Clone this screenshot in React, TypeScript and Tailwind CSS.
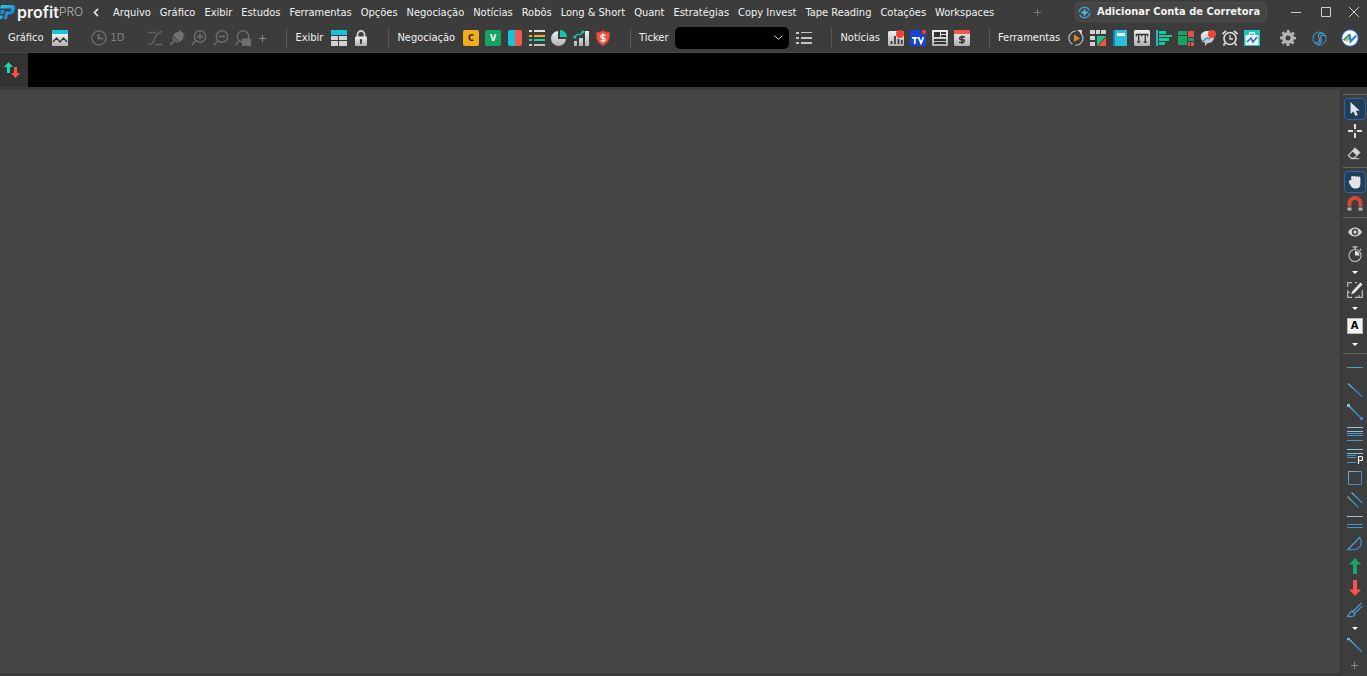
import React from "react";
import clsx from "clsx";

interface IconProps {
  children: React.ReactNode;
  size?: number;
}

const Icon: React.FC<IconProps> = ({ children, size = 16 }) => (
  <svg width={size} height={size} viewBox="0 0 16 16" fill="none" className="shrink-0" aria-hidden="true">
    {children}
  </svg>
);

interface ToolProps {
  label: string;
  children: React.ReactNode;
  className?: string;
}

const Tool: React.FC<ToolProps> = ({ label, children, className }) => (
  <button
    title={label}
    aria-label={label}
    className={clsx("flex h-[22px] w-[22px] shrink-0 items-center justify-center", className)}
  >
    {children}
  </button>
);

const Caret: React.FC<{ label: string }> = ({ label }) => (
  <button aria-label={label} className="flex h-[14px] w-[22px] shrink-0 items-center justify-center">
    <svg width="6" height="3" viewBox="0 0 6 3" aria-hidden="true">
      <path d="M0 0h6L3 3z" fill="#fff" />
    </svg>
  </button>
);

const Group: React.FC<{ label: string; children: React.ReactNode; last?: boolean }> = ({
  label,
  children,
  last,
}) => (
  <div className="flex shrink-0 items-center">
    <span className="mr-[5px] whitespace-nowrap pl-2">{label}</span>
    {children}
    {!last && <span className="ml-4 h-5 w-px bg-[#585858]" />}
  </div>
);

const menus = [
  "Arquivo",
  "Gráfico",
  "Exibir",
  "Estudos",
  "Ferramentas",
  "Opções",
  "Negociação",
  "Notícias",
  "Robôs",
  "Long & Short",
  "Quant",
  "Estratégias",
  "Copy Invest",
  "Tape Reading",
  "Cotações",
  "Workspaces",
];

const Gradients = () => (
  <svg width="0" height="0" className="absolute" aria-hidden="true">
    <defs>
      <linearGradient id="silver" x1="0" y1="0" x2="0" y2="1">
        <stop offset="0" stopColor="#f0f0f0" />
        <stop offset="1" stopColor="#aeb0b3" />
      </linearGradient>
      <linearGradient id="brand" x1="0" y1="0" x2="1" y2="1">
        <stop offset="0" stopColor="#19d3e6" />
        <stop offset="1" stopColor="#1e63d8" />
      </linearGradient>
      <linearGradient id="line" gradientUnits="userSpaceOnUse" x1="0" y1="0" x2="16" y2="16">
        <stop offset="0" stopColor="#7cc4d8" />
        <stop offset="0.5" stopColor="#3d9ad2" />
        <stop offset="1" stopColor="#3f74c4" />
      </linearGradient>
    </defs>
  </svg>
);

const Logo = () => (
  <div className="flex w-[83px] shrink-0 items-center">
    <svg width="17" height="16" viewBox="0 0 17 16" className="shrink-0" aria-hidden="true">
      <path d="M1 1h11c2.500 0 3.500 1.500 3 3.500l-.8 3C13.600 9.500 12 10.500 10 10.500H8L7 15H3.500L6 7.500h4.500l.7-3H0z" fill="url(#brand)" />
      <path d="M1 6h4L3.500 10H0z" fill="#2386de" />
      <path d="M0 11.500h3L2 15H0z" fill="#19b3e6" />
    </svg>
    <span className="font-['Inter',sans-serif] text-[16px] leading-5 font-semibold text-[#f4f4f4]">profit</span>
    <span className="font-['Inter',sans-serif] text-[12px] leading-5 font-light text-[#b4b4b4]">PRO</span>
  </div>
);

const TitleBar = () => (
  <header className="flex h-6 shrink-0 items-center">
    <Logo />
    <button aria-label="Recolher menu" className="flex h-5 w-[26px] shrink-0 items-center justify-center">
      <svg width="6" height="9" viewBox="0 0 6 9" fill="none" aria-hidden="true">
        <path d="M5 .8L1.500 4.500 5 8.200" stroke="#e0e0e0" strokeWidth="1.800" />
      </svg>
    </button>
    <nav className="ml-1 flex shrink-0 items-center gap-[9px] pt-0.5">
      {menus.map((item) => (
        <button key={item} className="whitespace-nowrap">
          {item}
        </button>
      ))}
    </nav>
    <div className="ml-auto flex shrink-0 items-center">
      <button aria-label="Novo menu" className="mr-7 flex h-5 w-5 items-center justify-center">
        <svg width="7" height="7" viewBox="0 0 7 7" aria-hidden="true">
          <path d="M3 0h1v7H3zM0 3h7v1H0z" fill="#7b7b7b" />
        </svg>
      </button>
      <button className="mr-3.5 flex h-5 w-[192px] items-center gap-1.5 rounded border border-[#4c4c4c] bg-[#454545] px-0.5 font-bold whitespace-nowrap">
        <Icon size={13}>
          <circle cx="8" cy="8" r="6.500" stroke="#3a9fd6" strokeWidth="1.800" strokeDasharray="17 3.400" />
          <path d="M8 4.200v7.600M4.200 8h7.600" stroke="#56b9e6" strokeWidth="2.200" />
        </Icon>
        Adicionar Conta de Corretora
      </button>
      <button aria-label="Minimizar" className="flex h-6 w-[30px] items-center justify-center">
        <svg width="10" height="10" viewBox="0 0 10 10" aria-hidden="true">
          <path d="M0 5h10v1H0z" fill="#d0d0d0" />
        </svg>
      </button>
      <button aria-label="Maximizar" className="flex h-6 w-[30px] items-center justify-center">
        <svg width="10" height="10" viewBox="0 0 10 10" fill="none" aria-hidden="true">
          <path d="M.5.5h9v9h-9z" stroke="#d0d0d0" />
        </svg>
      </button>
      <button aria-label="Fechar" className="flex h-6 w-[26px] items-center justify-center">
        <svg width="10" height="10" viewBox="0 0 10 10" fill="none" aria-hidden="true">
          <path d="M0 0l10 10M10 0L0 10" stroke="#d0d0d0" />
        </svg>
      </button>
    </div>
  </header>
);

const ToolBar = () => (
  <div className="flex h-7 shrink-0 items-center">
    <Group label="Gráfico">
      <Tool label="Novo gráfico">
        <Icon>
          <path d="M0 0h16v4H0z" fill="#13c5d6" />
          <path d="M0 4h16v12H0z" fill="url(#silver)" />
          <path d="M1 12l3.500-4L8 12l3.500-4L15 12" stroke="#333" strokeWidth="1.300" />
        </Icon>
      </Tool>
      <button className="ml-4 flex h-[22px] shrink-0 items-center gap-1 pl-1 text-[#858585]">
        <Icon>
          <circle cx="8" cy="8" r="7" stroke="#666" strokeWidth="1.600" />
          <path d="M7.500 4v4.500H12" stroke="#777" strokeWidth="1.500" />
        </Icon>
        1D
      </button>
      <Tool label="Tipo de gráfico" className="ml-5">
        <Icon>
          <path d="M1 2.500h8M.5 14.500c5 0 6-2 7-5.500S10.500 3 15.500 1M8 14.500h7.500" stroke="#626262" strokeWidth="1.500" />
        </Icon>
      </Tool>
      <Tool label="Pincel">
        <Icon>
          <path d="M11 0l5 5-2 1.500.5 2L11 12 4 5l3.500-3 1.500.5z" fill="#727272" />
          <path d="M4 6l6 6-2 1-2-1.500L2 15.500.5 14l4-4L3 8z" fill="#666" />
        </Icon>
      </Tool>
      <Tool label="Aumentar zoom">
        <Icon>
          <circle cx="9" cy="6.500" r="5.700" stroke="#6c6c6c" strokeWidth="1.500" />
          <path d="M9 3.500v6M6 6.500h6M5 10.500L.8 15" stroke="#6c6c6c" strokeWidth="1.500" />
        </Icon>
      </Tool>
      <Tool label="Diminuir zoom">
        <Icon>
          <circle cx="9" cy="6.500" r="5.700" stroke="#6c6c6c" strokeWidth="1.500" />
          <path d="M6 6.500h6M5 10.500L.8 15" stroke="#6c6c6c" strokeWidth="1.500" />
        </Icon>
      </Tool>
      <Tool label="Zoom por área">
        <Icon>
          <circle cx="8" cy="6.500" r="5.700" stroke="#6c6c6c" strokeWidth="1.500" />
          <path d="M4 10.500L.8 15" stroke="#6c6c6c" strokeWidth="1.500" />
          <path d="M7 8.500h9V16H7z" fill="#6f6f6f" />
        </Icon>
      </Tool>
      <button aria-label="Adicionar ferramenta" className="flex h-4 w-4 shrink-0 items-center justify-center">
        <svg width="7" height="7" viewBox="0 0 7 7" aria-hidden="true">
          <path d="M3 0h1v7H3zM0 3h7v1H0z" fill="#8b8b8b" />
        </svg>
      </button>
    </Group>

    <Group label="Exibir">
      <Tool label="Layout">
        <Icon>
          <path d="M0 0h16v5H0z" fill="#13c5d6" />
          <path d="M0 6h7v4H0zM8 6h8v4H8zM0 11h7v5H0zM8 11h8v5H8z" fill="#d2d2d3" />
        </Icon>
      </Tool>
      <Tool label="Bloquear">
        <Icon>
          <path d="M4.500 7V4.500a3.500 3.500 0 017 0V7" stroke="#cfcfcf" strokeWidth="1.800" />
          <rect x="2" y="6.500" width="12" height="9.500" rx="1" fill="url(#silver)" />
          <path d="M8 9a1.300 1.300 0 011 2l-.3 3H7.300L7 11a1.300 1.300 0 011-2z" fill="#333" />
        </Icon>
      </Tool>
    </Group>

    <Group label="Negociação">
      <Tool label="Comprar">
        <span className="flex h-4 w-4 items-center justify-center rounded-xs bg-[#f4ab1c] text-[9px] font-bold text-[#222]">
          C
        </span>
      </Tool>
      <Tool label="Vender">
        <span className="flex h-4 w-4 items-center justify-center rounded-xs bg-[#13a562] text-[9px] font-bold text-white">
          V
        </span>
      </Tool>
      <Tool label="Boleta">
        <Icon>
          <path d="M8 0H3a2 2 0 00-2 2v12a2 2 0 002 2h5z" fill="#13c5d6" />
          <path d="M8 0h5a2 2 0 012 2v12a2 2 0 01-2 2H8z" fill="#f75650" />
        </Icon>
      </Tool>
      <Tool label="Lista de ordens">
        <Icon>
          <path d="M0 0h3v2H0zM5 0h11v2H5z" fill="#e2e2e2" />
          <path d="M0 5h3v2H0zM5 5h11v2H5z" fill="#f4ab1c" />
          <path d="M0 9h3v2H0zM5 9h11v2H5z" fill="#12d9b4" />
          <path d="M0 14h3v2H0zM5 14h11v2H5z" fill="#c4c4c4" />
        </Icon>
      </Tool>
      <Tool label="Posição">
        <Icon>
          <path d="M7 1v8h8a7.500 7.500 0 11-8-8z" fill="url(#silver)" />
          <path d="M9 0a7 7 0 017 7H9z" fill="#12c9a6" />
        </Icon>
      </Tool>
      <Tool label="Desempenho">
        <Icon>
          <path d="M1 11h3v5H1zM6 8h4v8H6zM12 1h4v15h-4z" fill="url(#silver)" />
          <path d="M1.500 7L5 4l2 1 3.500-4" stroke="#12c9a6" strokeWidth="1.300" />
          <circle cx="1.800" cy="7" r="1.500" fill="#12c9a6" />
          <circle cx="10" cy="1.800" r="1.500" fill="#12c9a6" />
        </Icon>
      </Tool>
      <Tool label="Gerenciador de risco">
        <Icon>
          <path d="M8 .5c2 1.500 4 2 6.500 2C15 8 13.500 13 8 15.500 2.500 13 1 8 1.500 2.500 4 2.500 6 2 8 .5z" fill="#ef5145" stroke="#c23c30" />
          <path d="M10.500 5.200H7a1.400 1.400 0 000 2.800h2a1.400 1.400 0 010 2.800H5.500M8 3.500v9" stroke="#fff" strokeWidth="1.200" />
        </Icon>
      </Tool>
    </Group>

    <Group label="Ticker">
      <div className="ml-0.5 grid shrink-0 items-center">
        <select
          aria-label="Ticker"
          className="col-start-1 row-start-1 h-[22px] w-[114px] appearance-none rounded-[5px] bg-black px-2"
        />
        <svg
          width="9"
          height="6"
          viewBox="0 0 9 6"
          fill="none"
          className="pointer-events-none col-start-1 row-start-1 mr-1.5 justify-self-end"
          aria-hidden="true"
        >
          <path d="M.5.5l4 4 4-4" stroke="#ccc" />
        </svg>
      </div>
      <Tool label="Lista de ativos" className="ml-1">
        <Icon>
          <path d="M0 2h3v2H0zM5 2h11v1H5zM0 7h3v2H0zM5 7h11v2H5zM0 12h3v2H0zM5 12h11v2H5z" fill="#c0c3c8" />
        </Icon>
      </Tool>
    </Group>

    <Group label="Notícias">
      <Tool label="Alertas de mercado">
        <Icon>
          <rect y="1" width="16" height="15" rx="1.500" fill="url(#silver)" />
          <path d="M3.500 11v3M7 6v8M10.500 9v5M13.800 10v4" stroke="#3b3b3b" strokeWidth="1.800" />
          <circle cx="12" cy="4" r="4" fill="#f04436" />
        </Icon>
      </Tool>
      <Tool label="TV">
        <Icon>
          <rect width="16" height="16" rx="1" fill="#1646d2" />
          <circle cx="14" cy="2" r="2.600" fill="#f04436" stroke="#3b3b3b" />
          <path d="M2 7.800h5.500M4.800 7v7M8.500 7.200l2.500 6 2.500-6" stroke="#fff" strokeWidth="1.700" />
        </Icon>
      </Tool>
      <Tool label="Jornal">
        <Icon>
          <rect width="16" height="16" rx="1" fill="url(#silver)" />
          <path d="M2 2h6v5H2zM9 2h5v2H9zM9 5h5v2H9zM2 9h12v2H2zM2 12h12v2H2z" fill="#333" />
        </Icon>
      </Tool>
      <Tool label="Calendário econômico">
        <Icon>
          <rect width="16" height="16" rx="1.500" fill="url(#silver)" />
          <path d="M1 0h14l1 1v3H0V1z" fill="#f75650" />
          <path d="M11 7H7a1.300 1.300 0 000 2.700h2a1.300 1.300 0 010 2.700H5M8 5.500v8.500" stroke="#333" strokeWidth="1.400" />
        </Icon>
      </Tool>
    </Group>

    <Group label="Ferramentas" last>
      <Tool label="Replay">
        <Icon>
          <path d="M12 2.500A7 7 0 1110 1.500" stroke="#b8b8b8" strokeWidth="1.200" strokeDasharray="18 3" />
          <path d="M9 0h5v4z" fill="#d8d8d8" />
          <path d="M6 4.500l6 3.700L6 12z" fill="#dc862f" />
        </Icon>
      </Tool>
      <Tool label="Grade de cotações">
        <Icon>
          <path d="M0 0h5v4H0zM6 0h4v4H6zM11 0h5v4h-5zM0 6h5v4H0zM0 12h5v4H0z" fill="#d0d0d0" />
          <path d="M7 6h9l-9 10z" fill="#12c98c" />
          <path d="M16 7v9H8z" fill="#ef5145" />
        </Icon>
      </Tool>
      <Tool label="Livro de ofertas">
        <Icon>
          <path d="M1 0h14v16H1z" fill="#27c0d8" />
          <path d="M1 0h2v16H1z" fill="#1582b8" />
          <path d="M5 3h8v3H5z" fill="#f4f4f4" />
        </Icon>
      </Tool>
      <Tool label="Times & Trades">
        <Icon>
          <rect width="16" height="16" rx="1.500" fill="url(#silver)" />
          <path d="M1.800 4.500h12.400M4.700 4v8M11.300 4v8M3.200 12h3M9.800 12h3M2.300 4v2.500M7.800 4v2.500M13.700 4v2.500" stroke="#333" strokeWidth="1.300" />
        </Icon>
      </Tool>
      <Tool label="Volume por preço">
        <Icon>
          <path d="M0 0h2v16H0z" fill="#27b4d8" />
          <path d="M3 1h7v3H3zM3 5h13v2H3zM3 8h10v3H3zM3 12h6v3H3z" fill="#12d09c" />
        </Icon>
      </Tool>
      <Tool label="Mapa de mercado">
        <Icon>
          <path d="M0 1h9v4H0zM0 6h9v9H0zM10 8h6v3h-6z" fill="#13a562" />
          <path d="M10 1h6v6h-6zM10 12h2v4h-2zM13 12h3v4h-3z" fill="#ef4a45" />
        </Icon>
      </Tool>
      <Tool label="Chat">
        <Icon>
          <path d="M7 1a6 6 0 017 7 5.500 5.500 0 01-6 5l-3 3v-3a6 6 0 01-4-5C0 4 3 1 7 1z" fill="url(#silver)" />
          <path d="M2 12l5-4 2 1 4-5" stroke="#368fc8" strokeWidth="1.300" />
          <circle cx="12" cy="4" r="4" fill="#f04436" />
        </Icon>
      </Tool>
      <Tool label="Alarmes">
        <Icon>
          <circle cx="8" cy="8.500" r="6" stroke="#dcdcdc" strokeWidth="1.700" />
          <path d="M.5 4L4 .8M15.500 4L12 .8M3 13l-1.500 2.500M13 13l1.500 2.500" stroke="#dcdcdc" strokeWidth="1.800" />
          <path d="M8 5v4h3" stroke="#dcdcdc" strokeWidth="1.300" />
        </Icon>
      </Tool>
      <Tool label="Loja">
        <Icon>
          <path d="M0 0h16v16H0z" fill="#16c8b8" />
          <path d="M1.500 5h13v10h-13z" fill="#f4f4f4" />
          <path d="M5.500 5V3h5v2" stroke="#fff" strokeWidth="1.300" />
          <path d="M3 12l4-4 2 4 4-5" stroke="#1f73c9" strokeWidth="1.600" />
        </Icon>
      </Tool>
    </Group>

    <div className="ml-auto flex shrink-0 items-center gap-[9px] pr-1.5">
      <Tool label="Configurações">
        <Icon>
          <circle cx="8" cy="8" r="4.300" stroke="#b4b4b4" strokeWidth="3.600" />
          <circle cx="8" cy="8" r="6.700" stroke="#b4b4b4" strokeWidth="2.600" strokeDasharray="2.800 2.462" strokeDashoffset="1.400" />
        </Icon>
      </Tool>
      <Tool label="Conexão">
        <Icon size={15}>
          <circle cx="8" cy="8" r="7" stroke="#3889be" strokeWidth="1.200" />
          <path d="M11.500 2C6.500 2.500 6 4.500 7.500 7.500S7.500 13 3 12.500M14 5c-4-1.500-5.500 0-4.500 3s-.5 6-3.500 6.500" stroke="#46a6d6" strokeWidth="1.200" />
        </Icon>
      </Tool>
      <Tool label="Perfil">
        <Icon size={18}>
          <circle cx="8" cy="8" r="7.400" fill="#fff" stroke="#3753b4" strokeWidth="1" />
          <path d="M2.500 10l5-5" stroke="#36a26a" strokeWidth="2" />
          <path d="M4.500 11l3-3" stroke="#f0a828" strokeWidth="1.800" />
          <path d="M7.500 4.500l1 6.500 5-5" stroke="#2087d8" strokeWidth="2" />
        </Icon>
      </Tool>
    </div>
  </div>
);

const Divider: React.FC<{ className?: string }> = ({ className }) => (
  <span className={clsx("h-px w-6 shrink-0 bg-[#686868]", className)} />
);

const DrawingBar = () => (
  <aside className="flex w-[27px] shrink-0 flex-col items-center overflow-hidden border-l-2 border-[#383838] bg-[#3d3d3d] pt-1">
    <Divider className="mb-[3px]" />
    <Tool label="Cursor" className="rounded border border-[#2f62b4] bg-[#213f57]">
      <Icon>
        <path d="M3.500 1v12l3-2.500L8.500 15l2.300-1-2-4.300h4z" fill="#e4e4e4" />
      </Icon>
    </Tool>
    <Tool label="Mira">
      <Icon>
        <path d="M7 1h2v5H7zM7 10h2v5H7zM1 7h5v2H1zM10 7h5v2h-5zM7.500 7.500h1v1h-1z" fill="#e0e0e0" />
      </Icon>
    </Tool>
    <Tool label="Borracha">
      <Icon size={15}>
        <path d="M8.500 2.500l5 4.500-3 3-5-4.500z" fill="#d8d8d8" />
        <path d="M8.500 2.500l5 4.500-6 6H4.500l-3-3z" stroke="#c8c8c8" strokeWidth="1.400" />
        <path d="M4 13.500h9" stroke="#c8c8c8" strokeWidth="1.200" />
      </Icon>
    </Tool>
    <Divider className="my-[3px]" />
    <Tool label="Mover" className="rounded border border-[#2f62b4] bg-[#213f57]">
      <Icon>
        <path d="M2.500 6.500c.5-.7 1.300-.5 1.700 0V3.200c0-1.500 2-1.500 2.200 0 0-1.700 2.300-1.700 2.400 0 .2-1.500 2.200-1.300 2.300.3.200-1.300 2.200-1.200 2.300.3V10c0 3-1.800 4.500-4.700 4.500-3.500 0-4.400-1.500-5.700-4L1.500 8z" fill="#e4e4e4" />
      </Icon>
    </Tool>
    <Tool label="Ímã">
      <Icon>
        <path d="M2.500 10.500V7.500a5.500 5.500 0 0111 0v3" stroke="#d5463c" strokeWidth="4" />
        <path d="M.5 11.500h4v3h-4zM11.500 11.500h4v3h-4z" fill="#b4b4b4" />
      </Icon>
    </Tool>
    <Divider className="mt-[2px] mb-[3px]" />
    <Tool label="Exibir estudos">
      <Icon>
        <path d="M1 8c3.500-6 10.500-6 14 0-3.500 6-10.500 6-14 0z" fill="#d4d4d4" />
        <circle cx="8" cy="8" r="3.200" fill="#3d3d3d" />
        <circle cx="8" cy="8" r="1.700" fill="#d4d4d4" />
      </Icon>
    </Tool>
    <Tool label="Cronômetro">
      <Icon>
        <circle cx="8" cy="9.500" r="6" stroke="#b4b4b4" strokeWidth="1.200" />
        <path d="M5.500.8h5M8 1v2.500M13 3l1.200 1.200" stroke="#c8c8c8" strokeWidth="1.300" />
        <path d="M8 5v4.500h4.500A4.500 4.500 0 008 5z" fill="#e0e0e0" />
      </Icon>
    </Tool>
    <Caret label="Opções do cronômetro" />
    <Tool label="Editar desenho">
      <Icon>
        <path d="M.7 5V.7H5M8 .7h2M.7 8v7.300H5M8 15.300h7.300V8M.7 10.500H3M12 13v2.300" stroke="#b8b8b8" strokeWidth="1.200" />
        <path d="M13.500.5l2 2-8 8.500-3.500 1.500L5.500 9z" fill="#e4e4e4" />
      </Icon>
    </Tool>
    <Caret label="Opções de edição" />
    <Tool label="Texto">
      <span className="flex h-4 w-4 items-center justify-center border border-[#b8b8b8] bg-[#f2f2f2] text-[11px] font-bold text-black">
        A
      </span>
    </Tool>
    <Caret label="Opções de texto" />
    <Divider className="mt-[2px] mb-[3px]" />
    <Tool label="Linha horizontal">
      <Icon>
        <path d="M0 7h16v1H0z" fill="#3ea3d2" />
      </Icon>
    </Tool>
    <Tool label="Linha de tendência">
      <Icon>
        <path d="M1 1.500l14 13" stroke="url(#line)" strokeWidth="1.200" />
      </Icon>
    </Tool>
    <Tool label="Segmento">
      <Icon>
        <path d="M1.500 1.500l13 13" stroke="url(#line)" strokeWidth="1.200" />
        <path d="M0 0h3v3H0z" fill="#7cc4e8" />
        <path d="M13 13h3v3h-3z" fill="#3f7fd4" />
      </Icon>
    </Tool>
    <Tool label="Fibonacci">
      <Icon>
        <path d="M0 1h16v1H0zM0 5h16v1H0z" fill="#8cc8da" />
        <path d="M0 7h16v1H0zM0 9h16v1H0zM0 14h16v1H0z" fill="#3f98d0" />
      </Icon>
    </Tool>
    <Tool label="Projeção de Fibonacci">
      <Icon>
        <path d="M0 1h16v1H0zM0 5h16v1H0z" fill="#8cc8da" />
        <path d="M0 7h9v1H0zM0 9h9v1H0zM0 14h9v1H0z" fill="#3f98d0" />
        <path d="M11.500 16V8.500h2.300a2 2 0 010 4h-2.300" stroke="#f4f4f4" strokeWidth="1.200" />
      </Icon>
    </Tool>
    <Tool label="Retângulo">
      <Icon>
        <path d="M1.500 1.500h13v13h-13z" stroke="url(#line)" />
      </Icon>
    </Tool>
    <Tool label="Canal">
      <Icon>
        <path d="M4.500.5L15.500 11M.5 4.500l11 11" stroke="url(#line)" strokeWidth="1.200" />
      </Icon>
    </Tool>
    <Tool label="Linhas paralelas">
      <Icon>
        <path d="M0 2h16v1H0z" fill="#8cc8da" />
        <path d="M0 10h16v1H0zM0 13h16v1H0z" fill="#3f98d0" />
      </Icon>
    </Tool>
    <Tool label="Arco">
      <Icon>
        <path d="M1 13.500L12.500 1.500c3 4 2 9-1.500 11-3 1.700-6 1.500-10 1z" stroke="url(#line)" strokeWidth="1.200" />
      </Icon>
    </Tool>
    <Tool label="Seta para cima">
      <Icon>
        <path d="M8 0l6 6.500h-4V16H6V6.500H2z" fill="#13a866" />
      </Icon>
    </Tool>
    <Tool label="Seta para baixo">
      <Icon>
        <path d="M8 16l6-6.500h-4V0H6v9.500H2z" fill="#f9544b" />
      </Icon>
    </Tool>
    <Tool label="Pincel livre">
      <Icon>
        <path d="M14.500 1L6 9.500M15.500 4L8 11M5 9l3 3c-1 3-4 3-7.500 2.500C2.500 13 2 10 5 9z" stroke="url(#line)" strokeWidth="1.300" />
      </Icon>
    </Tool>
    <Caret label="Opções de pincel" />
    <Tool label="Seta">
      <Icon>
        <path d="M1 0l14 14" stroke="url(#line)" strokeWidth="1.300" />
        <path d="M0-1h4L0 3z" fill="#7cc4e8" />
      </Icon>
    </Tool>
    <button aria-label="Adicionar desenho" className="flex h-4 w-[22px] shrink-0 items-center justify-center">
      <svg width="7" height="7" viewBox="0 0 7 7" aria-hidden="true">
        <path d="M3 0h1v7H3zM0 3h7v1H0z" fill="#8b8b8b" />
      </svg>
    </button>
  </aside>
);

export default function App() {
  return (
    <div className="flex h-screen flex-col overflow-hidden bg-[#3c3c3c] font-['DejaVu_Sans_Condensed','Noto_Sans',sans-serif] text-[11px] leading-4 text-[#f2f2f2]">
      <Gradients />
      <TitleBar />
      <ToolBar />
      <div className="flex h-[35px] shrink-0 border-t border-[#484848] bg-black">
        <button aria-label="Compra e venda" className="flex w-7 shrink-0 items-center justify-center bg-[#333]">
          <svg width="16" height="16" viewBox="0 0 16 16" className="mr-1" aria-hidden="true">
            <path d="M4.500 0L9 5H6v6H3V5H0z" fill="#12d9b4" />
            <path d="M11.500 16L7 11h3V5h3v6h3z" fill="#f9544b" />
          </svg>
        </button>
      </div>
      <div className="flex min-h-0 grow border-t-3 border-[#3a3a3a]">
        <main className="grow border-b-3 border-[#3b3838] bg-[#454545]" />
        <DrawingBar />
      </div>
    </div>
  );
}
